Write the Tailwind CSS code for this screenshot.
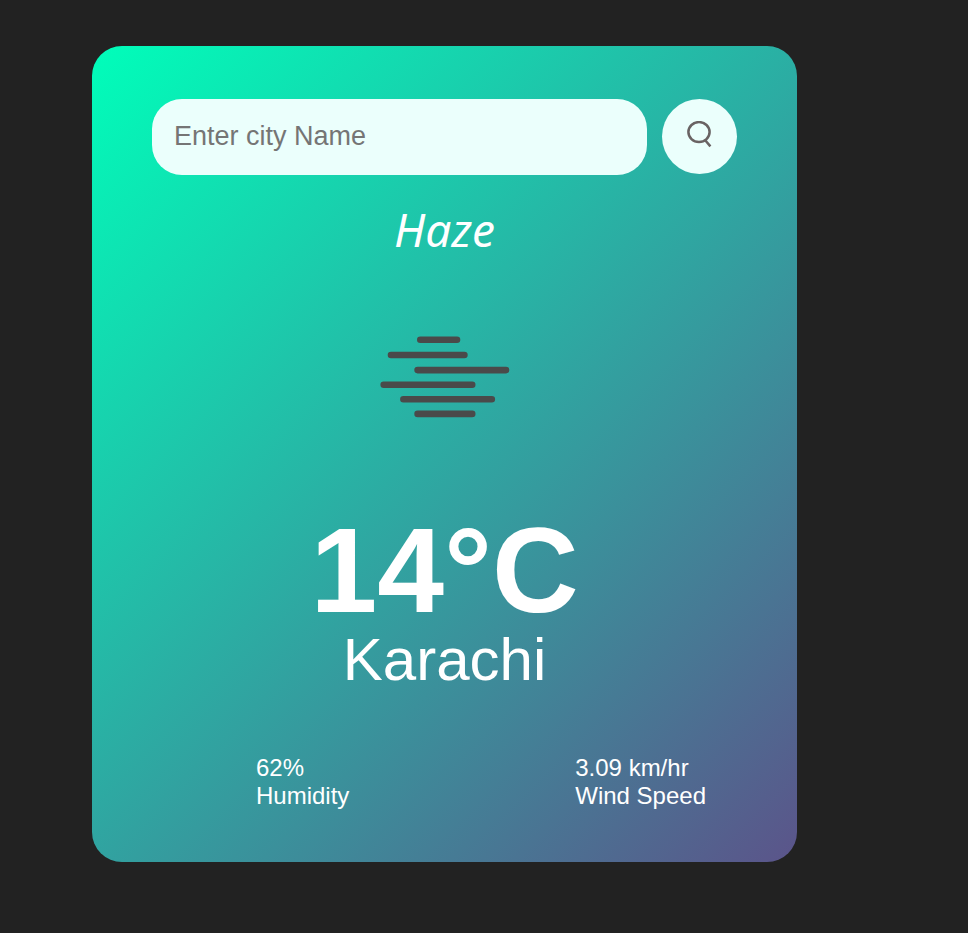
<!DOCTYPE html>
<html lang="en">
<head>
<meta charset="utf-8">
<meta name="viewport" content="width=device-width, initial-scale=1">
<title>Weather</title>
<script src="https://cdn.jsdelivr.net/npm/@tailwindcss/browser@4"></script>
</head>
<body class="min-h-screen bg-[#222] pt-[46px] pr-[171px] pb-16 pl-[92px] font-['Liberation_Sans',Arial,sans-serif] text-white">
<main class="w-full max-w-[705px] rounded-[30px] bg-[linear-gradient(135deg,#00feba,#5b548a)] px-[60px] pt-[53px] pb-[52px]">
  <form class="flex items-start gap-[15px]" onsubmit="return false">
    <input type="text" aria-label="City name" placeholder="Enter city Name" class="h-[76px] min-w-0 flex-1 rounded-[30px] bg-[#ebfffc] px-[22px] pb-0.5 text-[27px] text-[#555] outline-none placeholder:text-[#757575]">
    <button type="submit" aria-label="Search" class="flex size-[75px] shrink-0 items-center justify-center rounded-full bg-[#ebfffc] pb-1">
      <svg class="size-7" viewBox="0 0 28 28" fill="none" stroke="#696363" stroke-width="2.5" aria-hidden="true"><ellipse cx="13" cy="11.1" rx="10.6" ry="10"/><path d="M19 19 24.4 25.4"/></svg>
    </button>
  </form>
  <section class="flex flex-col items-center">
    <p class="mt-6 font-['Noto_Sans',sans-serif] text-[46px] leading-[60px] italic">Haze</p>
    <svg class="mt-[76px] h-[84px] w-[130px]" viewBox="0 0 130 84" fill="none" stroke="#4a4a4a" stroke-width="6.6" stroke-linecap="round" aria-hidden="true">
      <path d="M40.3 4.7H77M11 20H84.4M37.6 35.1H126M3.7 49.7H92.2M23.4 64.3H111.8M37.6 78.9H92.2"/>
    </svg>
    <h1 class="mt-[91px] text-[120px] leading-[120px] font-bold">14°C</h1>
    <h2 class="text-[60px] leading-[60px]">Karachi</h2>
  </section>
  <section class="mt-16 flex justify-between gap-6 pr-[31px] pl-[104px] text-2xl leading-7">
    <div><p>62%</p><p>Humidity</p></div>
    <div><p>3.09 km/hr</p><p>Wind Speed</p></div>
  </section>
</main>
</body>
</html>
